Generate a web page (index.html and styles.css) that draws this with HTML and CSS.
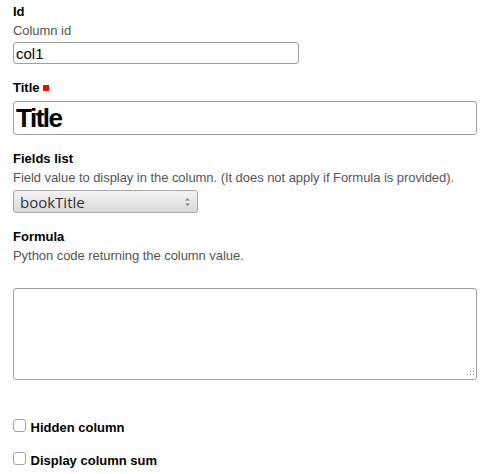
FILE: index.html
```html
<!DOCTYPE html>
<html lang="en">
<head>
    <meta charset="UTF-8">
    <title>Column</title>
    <link rel="stylesheet" href="styles.css">
</head>
<body>
    <form class="column-form">
        <div class="field">
            <label class="field-label" for="colId">Id</label>
            <div class="help">Column id</div>
            <input type="text" id="colId" class="text-small" value="col1">
        </div>

        <div class="field">
            <label class="field-label" for="colTitle">Title <span class="required"></span></label>
            <input type="text" id="colTitle" class="text-title" value="Title">
        </div>

        <div class="field">
            <label class="field-label" for="colField">Fields list</label>
            <div class="help">Field value to display in the column. (It does not apply if Formula is provided).</div>
            <div class="select" id="colField">
                <span>bookTitle</span>
                <svg width="7" height="12" viewBox="0 0 7 12"><path d="M1 4.5 L3.5 2 L6 4.5 Z M1 7.5 L3.5 10 L6 7.5 Z" fill="#888"/></svg>
            </div>
        </div>

        <div class="field">
            <label class="field-label" for="colFormula">Formula</label>
            <div class="help">Python code returning the column value.</div>
            <div class="area-wrap">
                <textarea id="colFormula"></textarea>
                <!-- resize grip -->
                <svg class="grip" width="11" height="11" viewBox="0 0 11 11">
                    <g fill="#999">
                        <rect x="9" y="1" width="1" height="1"/>
                        <rect x="6" y="4" width="1" height="1"/>
                        <rect x="9" y="4" width="1" height="1"/>
                        <rect x="3" y="7" width="1" height="1"/>
                        <rect x="6" y="7" width="1" height="1"/>
                        <rect x="9" y="7" width="1" height="1"/>
                    </g>
                </svg>
            </div>
        </div>

        <div class="check-list">
            <label class="check"><input type="checkbox"> Hidden column</label>
            <label class="check"><input type="checkbox"> Display column sum</label>
        </div>
    </form>
</body>
</html>
```
FILE: styles.css
```css
body {
    margin: 0;
    font-family: "Liberation Sans", Arial, sans-serif;
    font-size: 13px;
    color: #000;
    background: #fff;
}

.column-form {
    padding: 4px 9px 0 13px;
}

.field {
    display: flex;
    flex-direction: column;
    align-items: flex-start;
    margin-bottom: 16px;
}

.field-label {
    font-weight: bold;
    line-height: 15px;
    margin-bottom: 4px;
}

.required {
    display: inline-block;
    width: 6px;
    height: 6px;
    vertical-align: 1px;
    background: #f00;
}

.help {
    color: #555;
    line-height: 15px;
    margin-bottom: 4px;
    letter-spacing: -0.05px;
}

input[type="text"],
textarea {
    box-sizing: border-box;
    border: 1px solid #a0a0a0;
    border-radius: 3px;
    font-family: "Liberation Sans", Arial, sans-serif;
    padding: 0 2px;
    margin: 0;
    background: #fff;
}

.text-small {
    width: 286px;
    height: 22px;
    font-size: 15px;
}

.text-title {
    width: 100%;
    height: 34px;
    margin-top: 2px !important;
    font-size: 26px;
    font-weight: bold;
    letter-spacing: -1.5px;
}

.select {
    box-sizing: border-box;
    width: 185px;
    height: 23px;
    margin-top: 1px;
    display: flex;
    align-items: center;
    justify-content: space-between;
    padding: 0 6px 0 6px;
    border: 1px solid #a8a8a8;
    border-radius: 3px;
    background: linear-gradient(#f3f3f3, #dadada);
    font-family: "Open Sans", sans-serif;
    font-size: 15px;
    color: #333;
}

.area-wrap {
    position: relative;
    width: 100%;
    margin-top: 21px;
}

textarea {
    display: block;
    width: 100%;
    height: 92px;
    resize: none;
}

.grip {
    position: absolute;
    right: 2px;
    bottom: 2px;
}

.check-list {
    display: flex;
    flex-direction: column;
    gap: 16px;
    padding-top: 23px;
}

.check {
    display: block;
    line-height: 17px;
    font-weight: bold;
}

.check input {
    appearance: none;
    box-sizing: border-box;
    width: 13px;
    height: 13px;
    margin: 0 1px 0 0;
    vertical-align: baseline;
    border: 1px solid #a5a5a5;
    border-radius: 3px;
    background: #fff;
}
```
